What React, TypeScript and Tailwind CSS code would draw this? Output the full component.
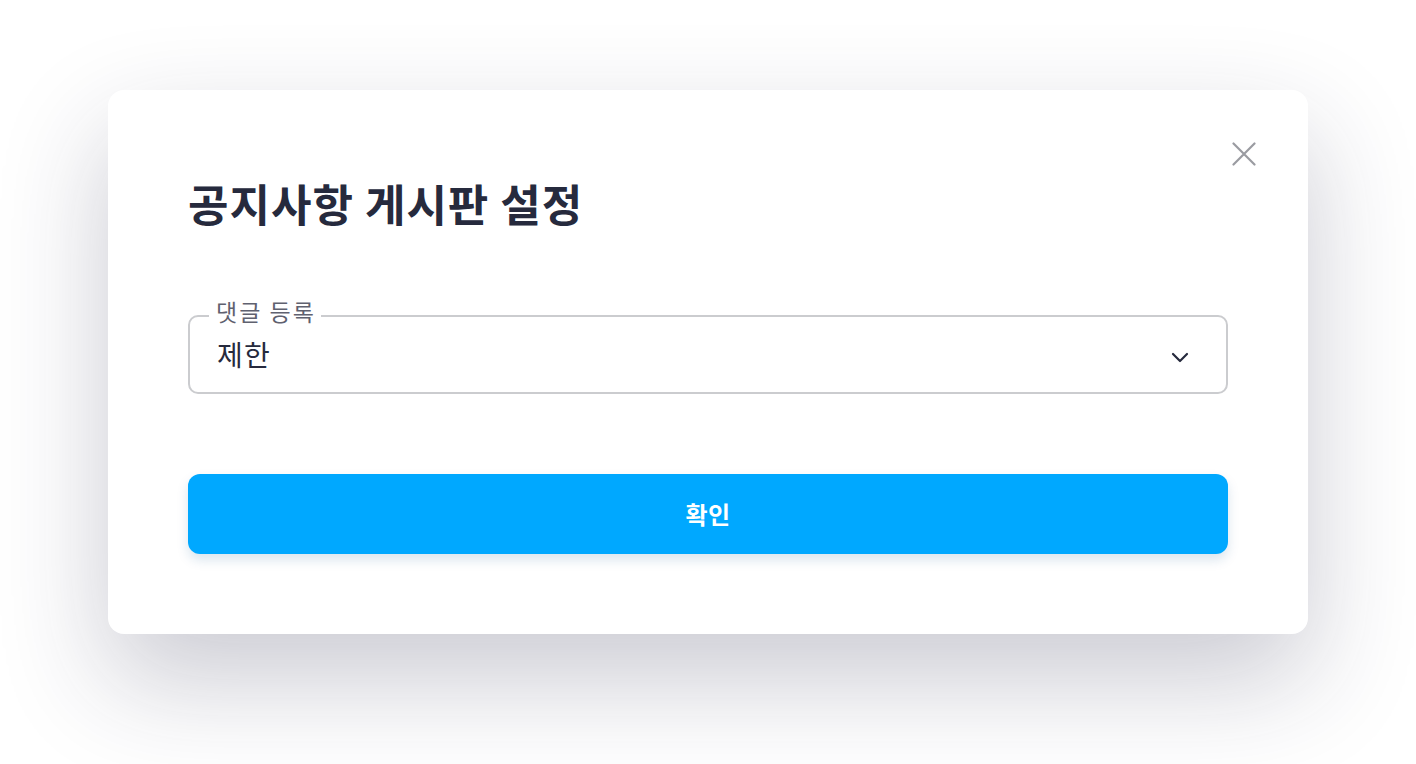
import React from 'react';

const font = { fontFamily: '"Noto Sans CJK KR", "Noto Sans", sans-serif' };

const CloseIcon: React.FC = () => (
    <svg width="24" height="24" viewBox="0 0 24 24" fill="none" stroke="#9a9ba1" strokeWidth="2.2" strokeLinecap="round">
        <path d="M1.5 1.5L22.5 22.5M22.5 1.5L1.5 22.5" />
    </svg>
);

const ChevronDown: React.FC = () => (
    <svg width="18" height="12" viewBox="0 0 18 12" fill="none" stroke="#262a3d" strokeWidth="2.2" strokeLinecap="round" strokeLinejoin="round">
        <path d="M2 3L9 10L16 3" />
    </svg>
);

const SelectField: React.FC<{ label: string; value: string }> = ({ label, value }) => (
    <div className="relative h-[79px] border-2 border-[#cbcccf] rounded-[10px] flex items-center justify-between pl-[27px] pr-[37px]">
        <span className="absolute left-[19px] top-[-19px] pl-[7px] pr-[5px] bg-white text-[23px] leading-[26px] tracking-[2px] text-[#5f616f]">{label}</span>
        <span className="text-[28px] tracking-[1.2px] text-[#262a3d] -mt-[2px]">{value}</span>
        <span className="mt-[4px]"><ChevronDown /></span>
    </div>
);

const App: React.FC = () => {
    return (
        <div className="min-h-[764px] bg-white flex justify-center items-start pt-[90px]" style={font}>
            <div className="relative w-[1200px] bg-white rounded-[16px] shadow-[0_45px_110px_rgba(35,35,65,0.24)] px-[80px] pt-[85px] pb-[80px] flex flex-col">
                <button className="absolute top-[52px] right-[52px]">
                    <CloseIcon />
                </button>
                <h1 className="text-[44px] leading-[56px] tracking-[1px] font-bold text-[#262a3d]">공지사항 게시판 설정</h1>
                <div className="mt-[84px]">
                    <SelectField label="댓글 등록" value="제한" />
                </div>
                <button className="mt-[80px] w-full h-[80px] rounded-[12px] bg-[#00a8ff] text-white text-[24px] tracking-[0.5px] font-bold shadow-[0_6px_12px_rgba(0,80,140,0.15)]">
                    확인
                </button>
            </div>
        </div>
    );
};

export default App;
